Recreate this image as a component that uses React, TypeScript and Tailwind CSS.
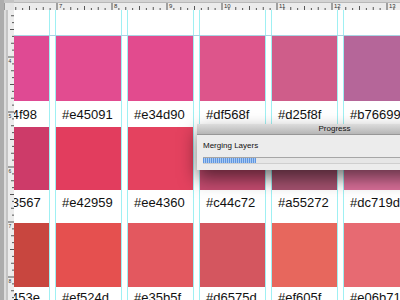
import React from 'react';

// Swatch rows: swatch height, label area height, then [swatch class, label]
const ROWS = [
  {
    swatch: 'h-[65px]',
    label: 'h-[26px] pt-[6px]',
    items: [
      ['bg-[#df4a93]', '#e34f98'],
      ['bg-[#e24c90]', '#e45091'],
      ['bg-[#e24b8e]', '#e34d90'],
      ['bg-[#dd558b]', '#df568f'],
      ['bg-[#cf5d8a]', '#d25f8f'],
      ['bg-[#b56699]', '#b76699'],
    ],
  },
  {
    swatch: 'h-[63px]',
    label: 'h-[33px] pt-[5px]',
    items: [
      ['bg-[#cd3b69]', '#d03567'],
      ['bg-[#e23d5e]', '#e42959'],
      ['bg-[#e4425f]', '#ee4360'],
      ['bg-[#c44b6f]', '#c44c72'],
      ['bg-[#a5526f]', '#a55272'],
      ['bg-[#d86e98]', '#dc719d'],
    ],
  },
  {
    swatch: 'h-[64px]',
    label: 'h-[20px] pt-[3px]',
    items: [
      ['bg-[#c8463f]', '#c9453e'],
      ['bg-[#e5504f]', '#ef524d'],
      ['bg-[#e3585f]', '#e35b5f'],
      ['bg-[#d4565f]', '#d6575d'],
      ['bg-[#e7675d]', '#ef605f'],
      ['bg-[#e76a72]', '#e06b71'],
    ],
  },
];

function TopRuler() {
  const ticks = [];
  for (let i = -8; i < 60; i++) {
    const x = 43 + i * 6.875;
    const m = ((i % 8) + 8) % 8;
    const h = m === 0 ? 7 : m === 4 ? 4 : m % 2 === 0 ? 3 : 2;
    ticks.push(<line key={i} x1={x} x2={x} y1={10 - h} y2={10} stroke="#555" strokeWidth="1" />);
  }
  const nums = [7, 8, 9, 10, 11, 12, 13];
  return (
    <svg width="386" height="10" className="block">
      <rect width="386" height="10" fill="#ececec" />
      <rect width="386" height="3" fill="#d4d4d4" />
      <line x1="0" x2="386" y1="2.5" y2="2.5" stroke="#b8b8b8" />
      {ticks}
      {nums.map((n, i) => (
        <text key={n} x={43 + i * 55 + 2} y="8" fontSize="6" fill="#333" fontFamily="Liberation Sans, sans-serif">
          {n}
        </text>
      ))}
    </svg>
  );
}

function LeftRuler() {
  const ticks = [];
  for (let i = -8; i < 45; i++) {
    const y = 47 + i * 6.875;
    const m = ((i % 8) + 8) % 8;
    const w = m === 0 ? 6 : m === 4 ? 4 : m % 2 === 0 ? 3 : 2;
    ticks.push(<line key={i} x1={6 - w} x2={6} y1={y} y2={y} stroke="#555" strokeWidth="1" />);
  }
  const nums = [4, 5, 6, 7, 8];
  return (
    <svg width="6" height="290" className="block">
      <rect width="6" height="290" fill="#ececec" />
      {ticks}
      {nums.map((n, i) => (
        <text key={n} x="0.5" y={47 + i * 55 + 6} fontSize="5" fill="#333" fontFamily="Liberation Sans, sans-serif">
          {n}
        </text>
      ))}
    </svg>
  );
}

function ProgressDialog() {
  return (
    <div className="absolute left-[197px] top-[124px] w-[275px] h-[46px] flex flex-col bg-[#ececec] shadow-[0_8px_18px_rgba(0,0,0,0.55)] font-['Liberation_Sans',sans-serif]">
      <div className="h-[11px] flex items-center justify-center bg-[linear-gradient(to_bottom,#dcdcdc,#b6b6b6)] border-b border-[#979797] text-[8px] leading-none text-[#111]">
        Progress
      </div>
      <div className="flex flex-col px-[6px] pt-[6px]">
        <span className="text-[8px] leading-[10px] text-[#111]">Merging Layers</span>
        <div className="mt-[6px] h-[7px] border-t border-[#a6a6a6] border-b border-b-[#cfcfcf] bg-[#e6e6e6]">
          <div className="h-full w-[53px] bg-[repeating-linear-gradient(90deg,#5f96e0_0px,#5f96e0_1px,#a9c9f2_1px,#a9c9f2_2px)]"></div>
        </div>
      </div>
    </div>
  );
}

export default function App() {
  return (
    <div className="relative w-[400px] h-[300px] overflow-hidden flex flex-col bg-white font-['Liberation_Sans',sans-serif]">
      {/* Top ruler row */}
      <div className="h-[10px] flex shrink-0">
        <div className="w-[14px] flex bg-[#c4c4c4]">
          <div className="w-[4px] bg-[#adadad]"></div>
          <div className="flex-1 mt-[3px] bg-[#e4e4e4] border-l border-[#9a9a9a]"></div>
        </div>
        <div className="flex-1">
          <TopRuler />
        </div>
      </div>

      <div className="flex-1 flex">
        {/* Left palette edge + ruler */}
        <div className="w-[4px] bg-[#acacac]"></div>
        <div className="w-[2px] bg-[#dcdcdc]"></div>
        <div className="w-[2px] bg-[#c4c4c4]"></div>
        <LeftRuler />

        {/* Canvas */}
        <div className="relative flex-1 overflow-hidden bg-white">
          <div className="flex gap-[5px] ml-[-31px]">
            {[0, 1, 2, 3, 4, 5].map((c) => (
              <div key={c} className="w-[67px] shrink-0 flex flex-col border-x border-[#9ff0f3]">
                <div className="h-[26px]"></div>
                {ROWS.map((row, r) => (
                  <React.Fragment key={r}>
                    <div className={`${row.swatch} ${row.items[c][0]}`}></div>
                    <div className={`${row.label} pl-[6px] text-[13px] leading-[15px] text-[#111] whitespace-nowrap`}>
                      {row.items[c][1]}
                    </div>
                  </React.Fragment>
                ))}
              </div>
            ))}
          </div>
          <div className="absolute left-0 right-0 top-[25px] h-px bg-[#a9d3e3]"></div>
        </div>
      </div>

      <ProgressDialog />
    </div>
  );
}
